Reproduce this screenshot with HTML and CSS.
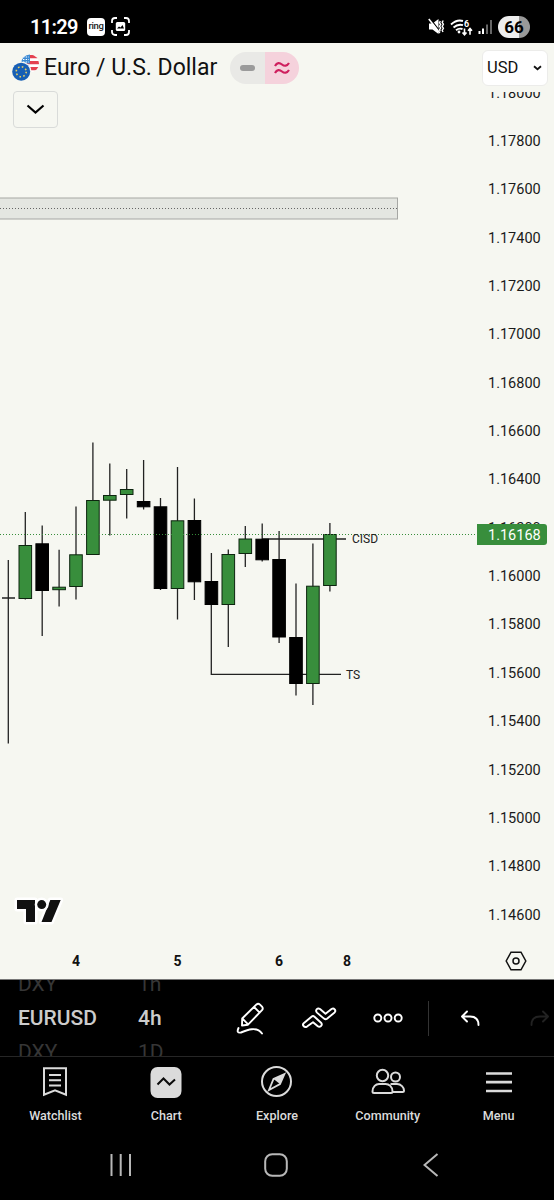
FILE: index.html
```
<!DOCTYPE html>
<html lang="en">
<head>
    <meta charset="UTF-8">
    <meta name="viewport" content="width=device-width, initial-scale=1.0">
    <title>EURUSD Chart</title>
    <link rel="stylesheet" href="styles.css">
</head>
<body>
    <div class="status-bar">
        <span class="time">11:29</span>
        <span class="ring">ring</span>
        <svg class="capture" width="19" height="19" viewBox="0 0 19 19">
            <path d="M1 6V4a3 3 0 0 1 3-3h2M13 1h2a3 3 0 0 1 3 3v2M18 13v2a3 3 0 0 1-3 3h-2M6 18H4a3 3 0 0 1-3-3v-2" fill="none" stroke="#fff" stroke-width="1.8"/>
            <rect x="4.8" y="5" width="9.4" height="9" rx="1.5" fill="#fff"/>
            <path d="M6 11.5l2-2 1.5 1 2-2.5 1.5 3.5z" fill="#000"/>
        </svg>
        <div class="status-icons">
            <svg width="17" height="17" viewBox="0 0 17 17">
                <path d="M1 5.500h3.500L10.500 1v15L4.500 11.500H1z" fill="#fff"/>
                <path d="M1.800 0l10.500 14" stroke="#000" stroke-width="1.300"/>
                <path d="M.8 1l11 14" stroke="#fff" stroke-width="1.600"/>
                <path d="M12.300 3l-.8 1.600 1.200 1.800-1.200 1.800 1.200 1.800-1.200 1.800.8 1.500M15.200 2.500l-1 1.800 1.200 2-1.200 2 1.200 2-1.200 2 .8 1.700" fill="none" stroke="#fff" stroke-width="1.400"/>
            </svg>
            <svg width="23" height="18" viewBox="0 0 23 18">
                <path d="M1 6.500Q7 1 13 3M3.500 9.500Q8 5.500 13 7.200M6 12.200Q9 9.800 12.500 11" fill="none" stroke="#fff" stroke-width="1.900"/>
                <circle cx="9" cy="14" r="1.400" fill="#fff"/>
                <text x="14" y="8.500" class="wifi-six">6</text>
                <path d="M14.500 10.500v6M12.500 14.500l2 2.200 2-2.200M20 16.700v-6M18 12.700l2-2.200 2 2.200" fill="none" stroke="#fff" stroke-width="1.600"/>
            </svg>
            <svg width="15" height="16" viewBox="0 0 15 16">
                <path d="M1.500 12v3M5 9.500V15" stroke="#fff" stroke-width="2"/>
                <path d="M9 5.500V15M13 1v14" stroke="#666" stroke-width="2"/>
            </svg>
            <span class="battery">66</span>
        </div>
    </div>

    <div class="chart">
        <div class="chart-header">
            <svg class="flags" width="28" height="28" viewBox="0 0 28 28">
                <clipPath id="usClip"><circle cx="18" cy="9.500" r="9"/></clipPath>
                <g clip-path="url(#usClip)">
                    <path d="M9 0h18v19H9z" fill="#fff"/>
                    <path d="M18 1h10v3.300H18zM18 7h10v3.200H9V9zM9 13h18v3.200H9z" fill="#e4404f"/>
                    <path d="M9 0h9v9.500H9z" fill="#3b8ad4"/>
                    <path d="M11 3h6M11 5.500h6M11 8h6" stroke="#fff" stroke-width="1.100" stroke-dasharray="1.400 1.300"/>
                </g>
                <circle cx="9.200" cy="17.700" r="10.300" fill="#f6f7f1"/>
                <circle cx="9.200" cy="17.700" r="9" fill="#175fb5"/>
                <circle cx="9.200" cy="17.700" r="5" fill="none" stroke="#e6cf62" stroke-width="1.600" stroke-dasharray="1.600 2.327"/>
            </svg>
            <h1 class="symbol">Euro / U.S. Dollar</h1>
            <div class="badges">
                <span class="badge-closed"><i></i></span>
                <span class="badge-approx">
                    <svg width="18" height="14" viewBox="0 0 18 14">
                        <path d="M2 5C4 1.500 6.500 1.500 9 3.500S14 5.200 16 2M2 12C4 8.500 6.500 8.500 9 10.500S14 12.200 16 9" fill="none" stroke="#cf1f5e" stroke-width="2.200"/>
                    </svg>
                </span>
            </div>
            <button class="currency">USD
                <svg width="9" height="6" viewBox="0 0 9 6"><path d="M1 1.300L4.500 4.300 8 1.300" fill="none" stroke="#111" stroke-width="1.800"/></svg>
            </button>
        </div>

        <div class="chart-body">
            <svg class="plot" width="476" height="850" viewBox="0 92 476 850">
                <rect x="-2" y="198" width="399.500" height="21" class="zone"/>
                <path d="M0 208.500H397" class="zone-mid"/>
                <path d="M262 539H346M211.300 600V674.300H341" class="level"/>
                <g id="candles"></g>
                <path d="M0 534.500H476" class="price-line"/>
                <text x="352" y="543" class="note">CISD</text>
                <text x="346" y="678.500" class="note">TS</text>
                <g class="logo">
                    <path d="M17 900h18v22h-9v-13h-9zM50.300 900h10.400l-9.200 22H41.500z"/>
                    <circle cx="41.700" cy="904.600" r="4.500"/>
                </g>
            </svg>
            <div class="price-axis">
                <span>1.18000</span>
                <span>1.17800</span>
                <span>1.17600</span>
                <span>1.17400</span>
                <span>1.17200</span>
                <span>1.17000</span>
                <span>1.16800</span>
                <span>1.16600</span>
                <span>1.16400</span>
                <span>1.16200</span>
                <span>1.16000</span>
                <span>1.15800</span>
                <span>1.15600</span>
                <span>1.15400</span>
                <span>1.15200</span>
                <span>1.15000</span>
                <span>1.14800</span>
                <span>1.14600</span>
            </div>
            <div class="last-price">1.16168</div>
            <button class="collapse">
                <svg width="19" height="11" viewBox="0 0 19 11"><path d="M1.500 1.500l8 7 8-7" fill="none" stroke="#000" stroke-width="2.200"/></svg>
            </button>
        </div>

        <div class="time-axis">
            <div class="days"><span>4</span><span>5</span><span>6</span><span>8</span></div>
            <svg width="22" height="20" viewBox="0 0 22 20">
                <path d="M6 1.200h10L20.800 10 16 18.800H6L1.200 10z" fill="none" stroke="#111" stroke-width="1.500"/>
                <circle cx="11" cy="10" r="3" fill="none" stroke="#111" stroke-width="1.500"/>
            </svg>
        </div>
    </div>

    <div class="toolbar">
        <div class="wheel wheel-symbol"><span class="dim">DXY</span><span>EURUSD</span><span class="dim">DXY</span></div>
        <div class="wheel wheel-interval"><span class="dim">1h</span><span>4h</span><span class="dim">1D</span></div>
        <div class="tools">
            <svg width="30" height="34" viewBox="0 0 30 34">
                <path d="M6 24.500L6.200 17.500 20.500 3.400Q22.200 2 24 3.600L26 5.600Q27.500 7.400 26 9.200L12 23.700zM18 6l5.700 5.700M6.500 17.700l5.600 5.600" />
                <path d="M2.500 27Q0 32.500 5 31.500C11 29 21 25 26 32.500"/>
            </svg>
            <svg width="36" height="22" viewBox="0 0 36 22">
                <path d="M2.700 16.200L10.500 9.700Q12 8.500 13.500 9.700L20.300 16Q21.500 18 19.800 19.300 18.200 20.500 16.500 19L12 15.200 6 19.600Q4 20.700 2.500 19 1.300 17.500 2.700 16.200zM15.800 2.200Q17.200.8 19 2L24.500 6.800 30.500 2Q32.300.8 33.700 2.300 35 4 33.600 5.400L26 11.700Q24.500 12.800 23 11.600L16 5.600Q14.300 4 15.800 2.200z"/>
            </svg>
            <svg width="30" height="10" viewBox="0 0 30 10">
                <circle cx="4.800" cy="5" r="3.500"/><circle cx="15" cy="5" r="3.500"/><circle cx="25.200" cy="5" r="3.500"/>
            </svg>
            <i class="divider"></i>
            <svg width="20" height="17" viewBox="0 0 20 17"><path d="M7 1.500L2 6.500l5 5M2.500 6.500h7.500q8.500 0 8.500 8.500"/></svg>
            <svg class="redo" width="20" height="17" viewBox="0 0 20 17"><path d="M13 1.500l5 5-5 5M17.500 6.500H10q-8.500 0-8.500 8.500"/></svg>
        </div>
    </div>

    <nav class="tabs">
        <a class="tab">
            <svg width="32" height="32" viewBox="0 0 32 32"><path d="M5 2.300h22v26.500l-11-4.500-11 4.500zM10 9h12M10 14.200h12M10 19.500h12"/></svg>
            Watchlist
        </a>
        <a class="tab">
            <svg width="32" height="32" viewBox="0 0 32 32"><rect x=".5" y="1" width="31" height="31" rx="7" fill="#dbdbdb" stroke="none"/><path d="M7.500 18.500l6-6 6 6 5.500-5" stroke="#0c0c0c"/></svg>
            Chart
        </a>
        <a class="tab">
            <svg width="32" height="32" viewBox="0 0 32 32"><circle cx="15.500" cy="15.500" r="14.500"/><path d="M23.500 8l-4.500 10-11 6 4.500-11z" stroke-width="1.800"/><path d="M23.500 8L19 18l-6.500-5z" fill="#dbdbdb" stroke="none"/></svg>
            Explore
        </a>
        <a class="tab">
            <svg width="34" height="32" viewBox="0 0 34 32"><circle cx="11.500" cy="9.500" r="5.700"/><circle cx="24.500" cy="11" r="4.500"/><path d="M1.500 25.500C1.500 20.500 5 18 8 18h6.500c3.500 0 7 2.500 7 7.500q0 1.500-1.500 1.500H3q-1.500 0-1.500-1.500zM19.500 18H26c4 0 7 3.500 7 6.500q0 1.500-1.500 1.500h-10"/></svg>
            Community
        </a>
        <a class="tab">
            <svg width="32" height="32" viewBox="0 0 32 32"><path d="M3 7.500h26M3 16.200h26M3 25h26" stroke-width="2.700"/></svg>
            Menu
        </a>
    </nav>

    <div class="system-nav">
        <svg width="22" height="22" viewBox="0 0 22 22"><path d="M1.500 0v22M10.700 0v22M20 0v22"/></svg>
        <svg width="24" height="24" viewBox="0 0 24 24"><rect x="1.200" y="1.200" width="21.600" height="21.600" rx="7"/></svg>
        <svg width="16" height="24" viewBox="0 0 16 24"><path d="M14.500 1L1.500 12l13 11"/></svg>
    </div>

    <script>
        // [x, high, low, body top, body bottom, up]
        const candles = [
            [25.3, 512, 599.5, 545, 599, 1],
            [42.2, 525.5, 636, 543.3, 591, 0],
            [59.1, 549.7, 606.5, 586.700, 590.2, 1],
            [76, 506.5, 599.5, 554.3, 587, 1],
            [92.9, 442.5, 554, 500, 555, 1],
            [109.8, 463.5, 535.5, 495, 500.7, 1],
            [126.7, 469, 518.5, 489, 495, 1],
            [143.6, 460, 509.5, 501, 507.3, 0],
            [160.5, 498, 590, 506.3, 589, 0],
            [177.5, 467, 619.5, 520.3, 589, 1],
            [194.4, 498.5, 600, 520, 582.3, 0],
            [211.4, 553, 605, 581, 605, 0],
            [228.3, 549.5, 647, 554, 605, 1],
            [245.3, 526, 567, 538.5, 554, 1],
            [262.2, 523.5, 561.5, 538.7, 560.3, 0],
            [279.1, 531, 643, 559, 637.5, 0],
            [296, 583.5, 695.5, 637, 684, 0],
            [312.9, 543.5, 705, 585.7, 684, 1],
            [329.9, 523, 591.5, 534, 586, 1]
        ];

        let html = '<path class="wick" d="M8.300 560V743.500M2 598H15"/>';
        candles.forEach(function([x, high, low, top, bottom, up]) {
            html += `<path class="wick" d="M${x} ${high}V${low}"/>`;
            html += `<rect class="${up ? 'up' : 'down'}" x="${x - 6.3}" y="${top + 0.5}" width="12.6" height="${bottom - top - 1}"/>`;
        });
        document.getElementById('candles').innerHTML = html;
    </script>
</body>
</html>
```
FILE: styles.css
```
* {
    box-sizing: border-box;
}

body {
    font-family: Roboto, sans-serif;
    margin: 0;
    background: #000;
    width: 554px;
    height: 1200px;
    overflow: hidden;
    display: flex;
    flex-direction: column;
}

svg {
    display: block;
    flex: none;
}

button {
    font-family: inherit;
    padding: 0;
}

/* phone status bar */
.status-bar {
    height: 43px;
    padding: 10px 24px 0 30px;
    display: flex;
    align-items: center;
    color: #fff;
}

.time {
    font-size: 20px;
    font-weight: 600;
    width: 57px;
    letter-spacing: -0.7px;
}

.ring {
    width: 18px;
    height: 18px;
    background: #fff;
    color: #222;
    border-radius: 4px;
    font-size: 9.500px;
    font-weight: 500;
    line-height: 16px;
    letter-spacing: -0.4px;
    text-align: center;
}

.capture {
    margin-left: 6px;
}

.status-icons {
    margin-left: auto;
    display: flex;
    align-items: center;
    gap: 5px;
}

.wifi-six {
    font-size: 9px;
    font-weight: 700;
    fill: #fff;
}

.battery {
    width: 32px;
    height: 22px;
    border-radius: 11px;
    background: linear-gradient(to right, #eee 66%, #999 66%);
    color: #000;
    font-size: 17px;
    font-weight: 700;
    line-height: 22px;
    text-align: center;
}

/* chart */
.chart {
    height: 937px;
    background: #f6f7f1;
    border-bottom: 1px solid #777;
}

.chart-header {
    height: 49px;
    padding: 0 6px 0 12px;
    display: flex;
    align-items: center;
}

.symbol {
    margin: -1px 0 0 4px;
    width: 186px;
    font-size: 23px;
    font-weight: 400;
    color: #111;
    white-space: nowrap;
}

.badges {
    display: flex;
    width: 69px;
    height: 32px;
    border-radius: 16px;
    overflow: hidden;
}

.badges span {
    flex: 1;
    display: flex;
    align-items: center;
    justify-content: center;
}

.badge-closed {
    background: #e9e9e6;
}

.badge-closed i {
    width: 15px;
    height: 6px;
    border-radius: 3px;
    background: #9b9b9b;
}

.badge-approx {
    background: #f5d2dc;
}

.currency {
    width: 66px;
    height: 36px;
    margin-left: auto;
    padding: 0 5px 0 4px;
    background: #fff;
    border: 1px solid #ececea;
    border-radius: 6px;
    display: flex;
    align-items: center;
    justify-content: space-between;
    font-size: 16.500px;
    color: #111;
}

.chart-body {
    position: relative;
    display: flex;
    height: 850px;
}

.zone {
    fill: #e4e6e1;
    stroke: #a6a7a4;
}

.zone-mid {
    stroke: #666;
    stroke-dasharray: 1 2;
}

.level {
    fill: none;
    stroke: #222;
    stroke-width: 1.300;
}

.wick {
    stroke: #222;
    stroke-width: 1.300;
}

.up {
    fill: #388e3c;
    stroke: #0d250f;
}

.down {
    fill: #000;
    stroke: #000;
}

.price-line {
    stroke: #388e3c;
    stroke-dasharray: 1 2;
}

.note {
    font-size: 12px;
    fill: #222;
}

.logo {
    fill: #111;
    stroke: #fff;
    stroke-width: 5px;
    stroke-linejoin: round;
    paint-order: stroke;
}

.price-axis {
    width: 78px;
    height: 850px;
    overflow: hidden;
    display: flex;
    flex-direction: column;
    padding-left: 12px;
}

.price-axis span {
    flex: none;
    height: 48.370px;
    line-height: 48.370px;
    font-size: 14.500px;
    color: #1a1a1a;
}

.price-axis span:first-child {
    margin-top: -22.500px;
}

.last-price {
    position: absolute;
    left: 477px;
    top: 432px;
    width: 70px;
    height: 21px;
    padding-left: 11px;
    background: #388e3c;
    border-radius: 0 3px 3px 0;
    color: #fff;
    font-size: 14.500px;
    line-height: 23px;
}

.collapse {
    position: absolute;
    left: 13px;
    top: -1px;
    width: 45px;
    height: 37px;
    display: flex;
    align-items: center;
    justify-content: center;
    background: #f6f7f1;
    border: 1px solid #d9dbd9;
    border-radius: 4px;
}

.time-axis {
    height: 37px;
    display: flex;
    align-items: center;
    justify-content: space-between;
    padding-right: 27px;
    padding-top: 1px;
}

.days {
    display: grid;
    grid-template-columns: 102px 101px 102px 34px;
    padding-left: 25px;
    text-align: center;
    font-size: 14px;
    font-weight: 700;
    color: #111;
}

/* symbol and tools bar */
.toolbar {
    height: 77px;
    display: flex;
    overflow: hidden;
    border-bottom: 1px solid #262626;
    color: #ccc;
}

.wheel {
    display: flex;
    flex-direction: column;
    margin-top: -13px;
    font-size: 21px;
    font-weight: 500;
}

.wheel span {
    flex: none;
    height: 34px;
    line-height: 34px;
}

.wheel .dim {
    font-weight: 400;
    color: #363636;
}

.wheel-symbol {
    width: 138px;
    padding-left: 18px;
}

.wheel-interval {
    width: 98px;
}

.tools {
    display: flex;
    align-items: center;
}

.tools svg {
    fill: none;
    stroke: #fff;
    stroke-width: 1.900;
    stroke-linejoin: round;
    stroke-linecap: round;
}

.tools svg:nth-child(2) {
    margin: 0 36px 0 35px;
}

.divider {
    width: 1px;
    height: 35px;
    background: #333;
    margin: 0 31px 0 25px;
}

.tools .redo {
    margin-left: 50px;
    stroke: #222;
}

/* bottom tabs */
.tabs {
    height: 73px;
    display: grid;
    grid-template-columns: repeat(5, 1fr);
}

.tab {
    display: flex;
    flex-direction: column;
    align-items: center;
    padding-top: 9px;
    gap: 10px;
    color: #dbdbdb;
    font-size: 12.600px;
    font-weight: 500;
}

.tab svg {
    fill: none;
    stroke: #dbdbdb;
    stroke-width: 2;
}

.system-nav {
    flex: 1;
    display: flex;
    align-items: center;
    justify-content: space-between;
    padding: 0 115px 0 110px;
}

.system-nav svg {
    fill: none;
    stroke: #b8b8b8;
    stroke-width: 2;
}

.system-nav svg:nth-child(2) {
    margin-right: 4px;
}
```
